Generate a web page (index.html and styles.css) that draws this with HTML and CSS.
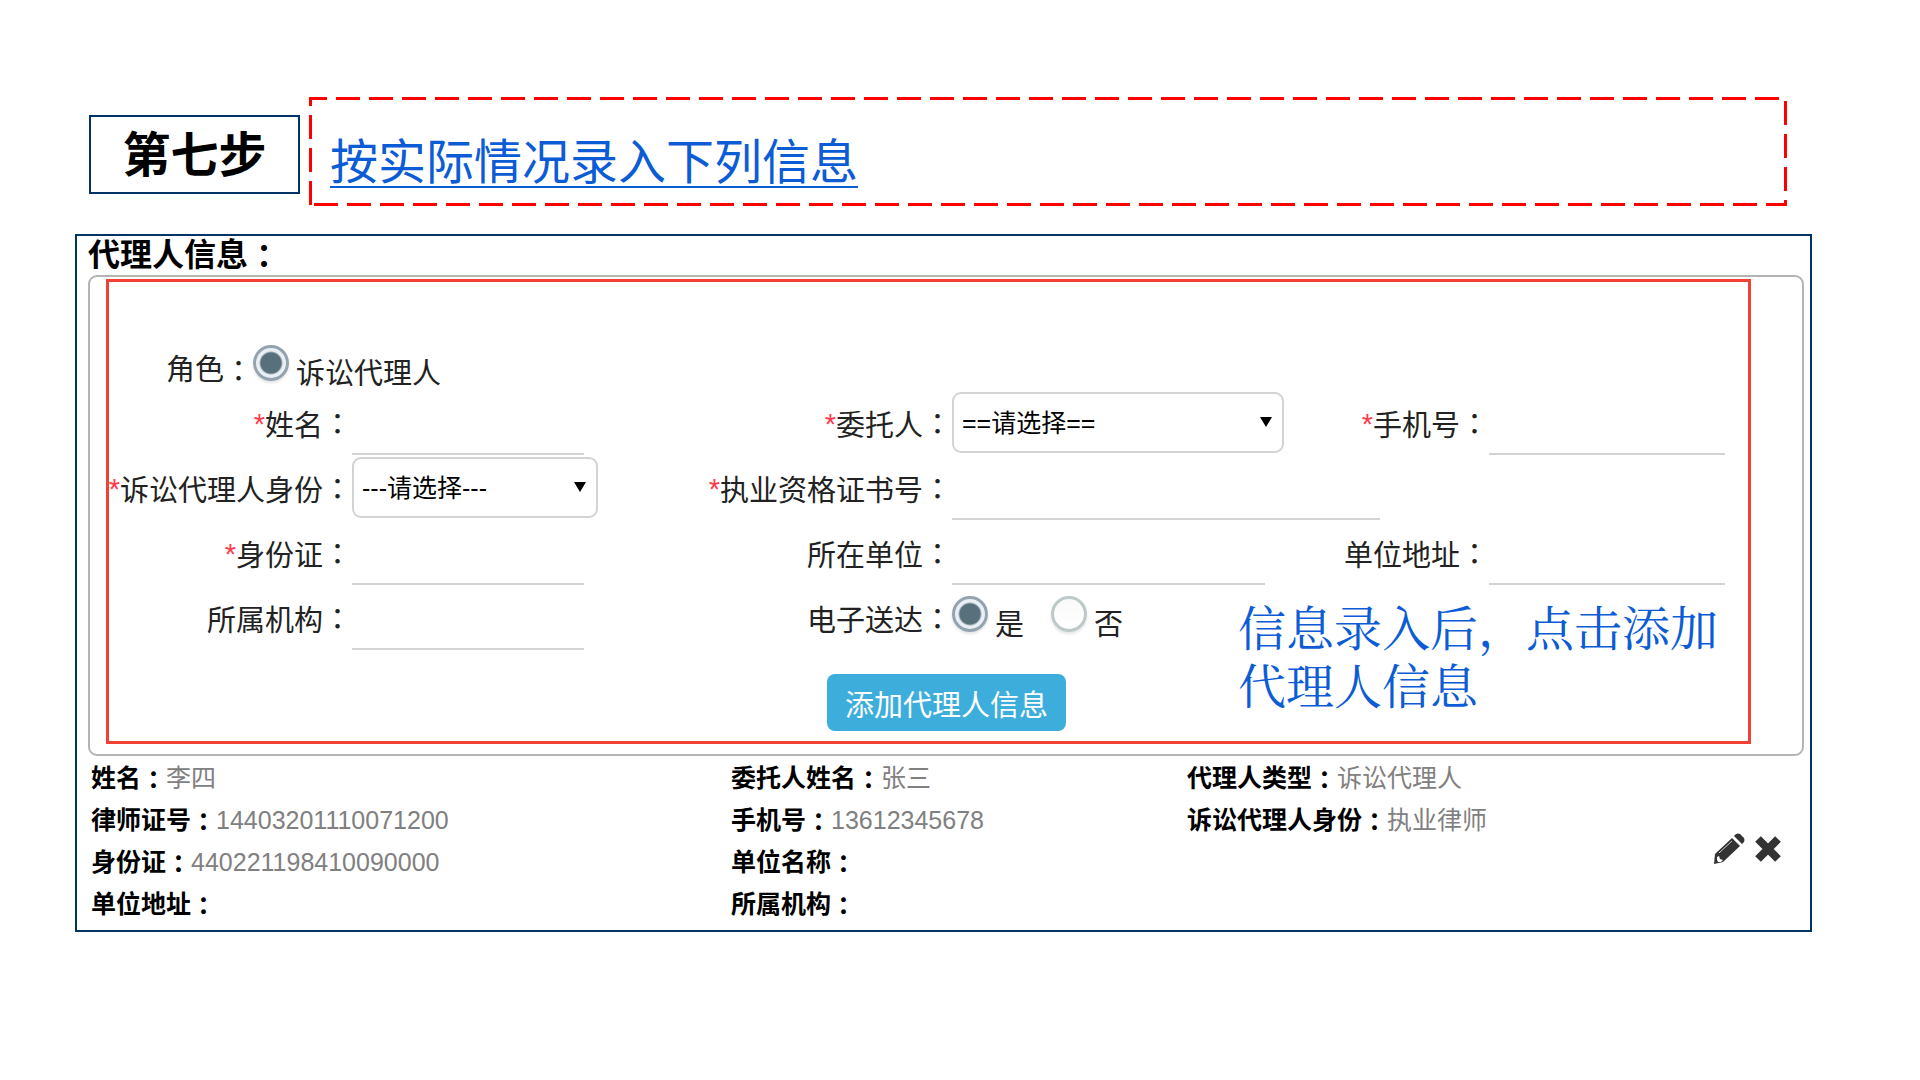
FILE: index.html
```html
<!DOCTYPE html>
<html lang="zh-CN">
<head>
    <meta charset="UTF-8">
    <meta name="viewport" content="width=device-width, initial-scale=1.0">
    <title>代理人信息</title>
    <link rel="stylesheet" href="styles.css">
</head>
<body>
    <header class="header">
        <div class="step">第七步</div>
        <div class="tip"><a href="#agent">按实际情况录入下列信息</a></div>
    </header>
    <main class="panel" id="agent">
        <h2 class="title">代理人信息<i>：</i></h2>
        <div class="box">
            <form class="form" name="agent_form" action="" method="post">
                <div class="role">
                    <span>角色<i>：</i></span>
                    <label class="option"><input type="radio" name="role" checked><span>诉讼代理人</span></label>
                </div>
                <div class="fields">
                    <div class="field first">
                        <label for="name"><em>*</em>姓名<i>：</i></label>
                        <input class="text" type="text" name="name" id="name">
                    </div>
                    <div class="field second">
                        <label for="client"><em>*</em>委托人<i>：</i></label>
                        <div class="select wide">
                            <select name="client" id="client"><option>==请选择==</option></select>
                        </div>
                    </div>
                    <div class="field third">
                        <label for="phone"><em>*</em>手机号<i>：</i></label>
                        <input class="text" type="text" name="phone" id="phone">
                    </div>

                    <div class="field first">
                        <label for="identity"><em>*</em>诉讼代理人身份<i>：</i></label>
                        <div class="select">
                            <select name="identity" id="identity"><option>---请选择---</option></select>
                        </div>
                    </div>
                    <div class="field second span">
                        <label for="licence"><em>*</em>执业资格证书号<i>：</i></label>
                        <input class="text long" type="text" name="licence" id="licence">
                    </div>

                    <div class="field first">
                        <label for="idcard"><em>*</em>身份证<i>：</i></label>
                        <input class="text" type="text" name="idcard" id="idcard">
                    </div>
                    <div class="field second">
                        <label for="company">所在单位<i>：</i></label>
                        <input class="text middle" type="text" name="company" id="company">
                    </div>
                    <div class="field third">
                        <label for="address">单位地址<i>：</i></label>
                        <input class="text" type="text" name="address" id="address">
                    </div>

                    <div class="field first">
                        <label for="org">所属机构<i>：</i></label>
                        <input class="text" type="text" name="org" id="org">
                    </div>
                    <div class="field second">
                        <span class="name">电子送达<i>：</i></span>
                        <label class="option"><input type="radio" name="delivery" checked><span>是</span></label>
                        <label class="option"><input type="radio" name="delivery"><span>否</span></label>
                    </div>
                </div>
                <div class="actions">
                    <button class="add" type="button">添加代理人信息</button>
                </div>
                <p class="note">信息录入后，点击添加代理人信息</p>
            </form>
        </div>
        <div class="detail">
            <div>
                <p><b>姓名<i>：</i></b>李四</p>
                <p><b>律师证号<i>：</i></b>14403201110071200</p>
                <p><b>身份证<i>：</i></b>440221198410090000</p>
                <p><b>单位地址<i>：</i></b></p>
            </div>
            <div>
                <p><b>委托人姓名<i>：</i></b>张三</p>
                <p><b>手机号<i>：</i></b>13612345678</p>
                <p><b>单位名称<i>：</i></b></p>
                <p><b>所属机构<i>：</i></b></p>
            </div>
            <div>
                <p><b>代理人类型<i>：</i></b>诉讼代理人</p>
                <p><b>诉讼代理人身份<i>：</i></b>执业律师</p>
            </div>
            <div class="tools">
                <button type="button" aria-label="编辑">
                    <svg width="32" height="32" viewBox="0 0 32 32">
                        <path fill="#333" d="M1 31l1-10L19 5l8 8L10 29z"/>
                        <path fill="#333" d="M21 3l2-2q2-1 4 0l4 4q1 2 0 4l-2 2z"/>
                        <path stroke="#ccc" stroke-width="1" d="M6 20L19 8"/>
                        <path fill="#fff" d="M4 24l2-1 1 3 3 1-2 2-3 0-1-2z"/>
                    </svg>
                </button>
                <button type="button" aria-label="删除">
                    <svg width="26" height="26" viewBox="0 0 26 26">
                        <path stroke="#333" stroke-width="8" d="M3 3l20 20M23 3L3 23"/>
                    </svg>
                </button>
            </div>
        </div>
    </main>
</body>
</html>
```

FILE: styles.css
```css
*{
    margin:0;
    padding:0;
    box-sizing:border-box;
}
body {
    padding: 97px 108px 0 75px;
    background: #fff;
    color: #222;
    font-family: "Liberation Sans","Noto Sans CJK SC",sans-serif;
    font-size: 29px;
}
button,input,select {
    font-family: inherit;
    border: 0;
    outline: none;
}
em {
    padding-top: 3px;
    color: #ff3b4b;
    font-style: normal;
}
/* centered colon */
i {
    display: inline-block;
    font-family: "Noto Sans CJK TC",sans-serif;
    font-style: normal;
    line-height: 1;
    vertical-align: -2px;
}

/* header */
.header {
    display: flex;
    align-items: center;
    gap: 9px;
    margin: 0 25px 28px 14px;
}
.step {
    width: 211px;
    height: 79px;
    margin-top: 6px;
    border: 2px solid #003366;
    color: #000;
    font-size: 48px;
    font-weight: bold;
    line-height: 78px;
    text-align: center;
}
.tip {
    flex: 1;
    height: 109px;
    padding: 18px 21px 0;
    font-size: 48px;
    line-height: 96px;
    background:
        repeating-linear-gradient(90deg, transparent 0 9px, red 9px 33px) -15px 0 / calc(100% + 15px) 3px no-repeat,
        repeating-linear-gradient(90deg, red 0 24px, transparent 24px 33px) 5px 100% / 100% 3px no-repeat,
        repeating-linear-gradient(red 0 24px, transparent 24px 33px) 0 -15px / 3px calc(100% + 15px) no-repeat,
        repeating-linear-gradient(red 0 24px, transparent 24px 33px) 100% 4px / 3px 100% no-repeat;
}
.tip a {
    color: #0b5cd5;
    text-decoration-thickness: 2px;
    text-underline-offset: 7px;
}

/* panel */
.panel {
    border: 2px solid #003366;
    padding: 0 6px 5px 11px;
}
.title {
    color: #000;
    font-size: 32px;
    line-height: 39px;
}
.box {
    border: 2px solid #b4b4b4;
    border-radius: 9px;
    padding: 2px 51px 10px 16px;
}
.form {
    position: relative;
    border: 3px solid #f04134;
    padding: 62px 0 10px;
}
.role {
    display: flex;
    align-items: center;
    height: 46px;
    padding-left: 57px;
}
.fields {
    display: grid;
    grid-template-columns: 489fr 687fr 463fr;
    grid-auto-rows: 65px;
}
.field {
    display: flex;
    align-items: center;
    white-space: nowrap;
}
.field > label:first-child,
.name {
    flex: none;
    display: flex;
    align-items: center;
    justify-content: flex-end;
}
.first > label:first-child {
    width: 243px;
}
.second > label:first-child,
.name {
    width: 354px;
}
.third > label:first-child {
    width: 204px;
}
.span {
    grid-column: span 2;
}
.text {
    width: 232px;
    height: 65px;
    border-bottom: 2px solid #d3d3d3;
    background: transparent;
    font-size: 25px;
}
.third .text {
    width: 236px;
}
.text.middle {
    width: 313px;
}
.text.long {
    width: 428px;
}
.select {
    position: relative;
    width: 246px;
}
.select.wide {
    width: 332px;
}
.select select {
    width: 100%;
    height: 61px;
    padding: 0 8px;
    appearance: none;
    border: 2px solid #d3d3d3;
    border-radius: 9px;
    background: #fff;
    color: #000;
    font-size: 25px;
}
.select::after {
    content: "";
    position: absolute;
    top: 25px;
    right: 12px;
    border: solid transparent;
    border-width: 10px 6px 0;
    border-top-color: #000;
    pointer-events: none;
}

/* radio */
.option {
    display: flex;
    align-items: center;
    gap: 7px;
    margin-right: 27px;
}
.option span {
    padding-top: 8px;
}
.option input {
    width: 36px;
    height: 36px;
    margin-bottom: 8px;
    appearance: none;
    border: 3px solid #bdc8c8;
    border-radius: 50%;
    background: linear-gradient(#fafafa, #fff);
    box-shadow: 0 2px 3px #e4e4e4;
}
.option input:checked {
    border-color: #93a3af;
    background: radial-gradient(#586f7c 0 10px, #e9eff4 12px);
}
.actions {
    padding: 24px 0 0 36px;
    text-align: center;
}
.add {
    display: block;
    height: 57px;
    margin: 0 auto;
    padding: 0 18px;
    border-radius: 8px;
    background: #3daedc;
    color: #fff;
    font-size: 29px;
}
.note {
    position: absolute;
    right: 24px;
    bottom: 28px;
    width: 486px;
    color: #0b5cd5;
    font-family: "Noto Serif CJK SC","Noto Sans CJK SC",serif;
    font-size: 48px;
    line-height: 58px;
}

/* detail */
.detail {
    display: grid;
    grid-template-columns: 640fr 456fr 494fr 100px;
    padding: 1px 23px 0 3px;
    color: #808080;
    font-size: 25px;
    line-height: 42px;
}
.detail b {
    color: #000;
}
.tools {
    display: flex;
    align-items: center;
    justify-content: flex-end;
    gap: 10px;
    padding-top: 16px;
}
.tools button {
    display: flex;
    background: none;
}
```
